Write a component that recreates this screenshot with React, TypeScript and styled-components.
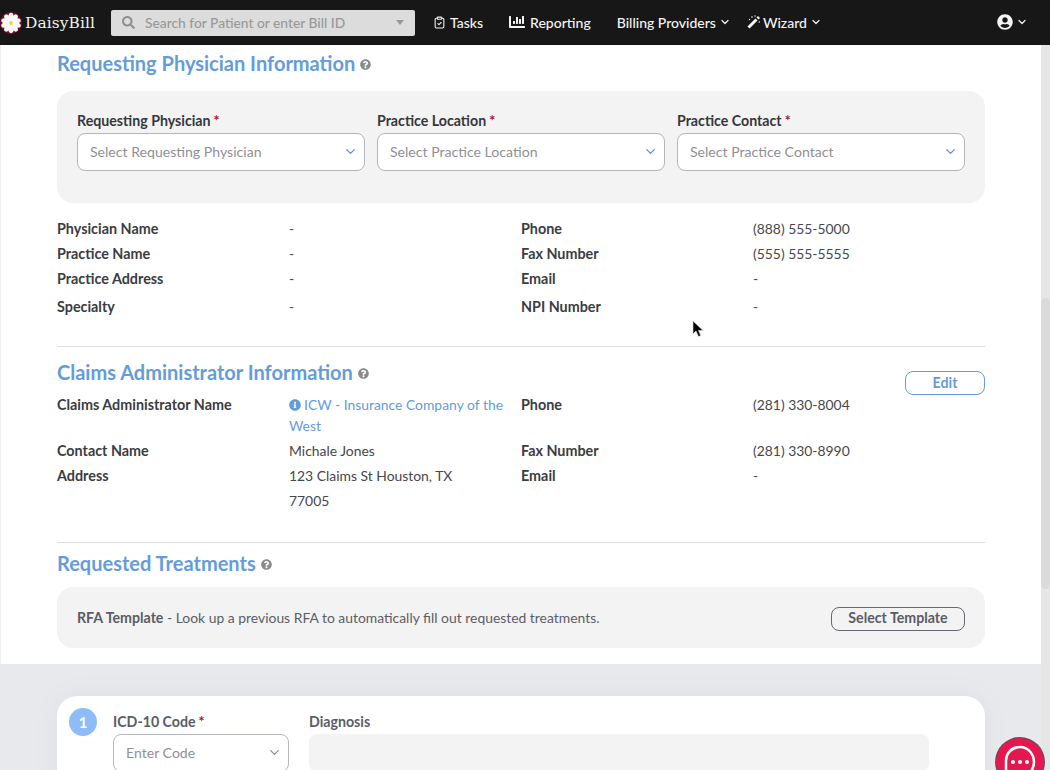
import { Fragment } from 'react';
import styled, { createGlobalStyle } from 'styled-components';
import { ChevronDown, ClipboardCheck } from 'lucide-react';
import { FaChartBar, FaInfoCircle, FaQuestionCircle, FaSearch, FaUserCircle } from 'react-icons/fa';

const GlobalStyle = createGlobalStyle`
  html, body {
    margin: 0;
    height: 770px;
    overflow: hidden;
    background: #e8e9ed;
    font-family: 'Lato', 'Open Sans', sans-serif;
    color: #3a3c42;
  }
  * { box-sizing: border-box; }
`;

const Shell = styled.div`
  position: relative;
  width: 1050px;
  height: 770px;
  overflow: hidden;
`;

const Nav = styled.header`
  height: 45px;
  background: #171717;
  display: flex;
  align-items: center;
  color: #f4f4f4;
  font-size: 14px;
  font-weight: 500;
`;

const Logo = styled.div`
  width: 111px;
  flex: none;
  display: flex;
  align-items: center;
  gap: 3px;
  font-family: 'DejaVu Serif', serif;
  font-size: 15.4px;
  letter-spacing: 0.1px;
  color: #f2f2f2;
`;

const SearchBox = styled.div`
  width: 304px;
  height: 26px;
  flex: none;
  background: #dcdcdc;
  border-radius: 2px;
  display: flex;
  align-items: center;
  padding: 0 11px;
  color: #999;
  font-size: 13.8px;
`;

const SearchText = styled.span`
  flex: 1;
  margin-left: 10px;
`;

const Caret = styled.span`
  width: 0;
  height: 0;
  border-left: 4.5px solid transparent;
  border-right: 4.5px solid transparent;
  border-top: 5px solid #999;
`;

const NavItem = styled.div<{ $left: number; $gap?: number }>`
  margin-left: ${(p) => p.$left}px;
  display: flex;
  align-items: center;
  gap: ${(p) => p.$gap ?? 5}px;
  margin-top: -1px;
`;

const Body = styled.div`
  display: flex;
  height: 725px;
`;

const Page = styled.main`
  width: 1041px;
  flex: none;
`;

const WhiteArea = styled.div`
  height: 619px;
  background: #fff;
  padding: 0 56px 0 56px;
  border-left: 1px solid #f0f0f2;
`;

const Inner = styled.div`
  width: 928px;
`;

const Heading = styled.h2<{ $top?: number }>`
  margin: ${(p) => p.$top ?? 0}px 0 0;
  height: 36px;
  display: flex;
  align-items: center;
  gap: 5px;
  font-size: 20px;
  font-weight: 700;
  color: #649cdb;
  svg {
    color: #8b8b8b;
    margin-top: 3px;
  }
`;

const Panel = styled.div`
  margin-top: 10px;
  background: #f3f3f4;
  border-radius: 16px;
  padding: 20px 20px 32px;
  display: grid;
  grid-template-columns: repeat(3, 288px);
  gap: 12px;
`;

const FieldLabel = styled.label<{ $muted?: boolean }>`
  display: block;
  height: 22px;
  font-size: 14.2px;
  font-weight: 700;
  line-height: 19px;
  color: ${(p) => (p.$muted ? '#5b5d66' : '#35373d')};
`;

const Star = styled.span`
  color: #b0122f;
  margin-left: 3px;
`;

const SelectBox = styled.div<{ $tone?: string }>`
  height: 38px;
  background: #fff;
  border: 1px solid #b5b6bc;
  border-radius: 8px;
  display: flex;
  align-items: center;
  justify-content: space-between;
  padding: 0 6px 1px 12px;
  font-size: 14.1px;
  color: #8f9096;
  svg {
    color: ${(p) => p.$tone ?? '#5f92cf'};
  }
`;

const DataGrid = styled.dl<{ $top?: number }>`
  margin: ${(p) => p.$top ?? 0}px 0 0;
  display: grid;
  grid-template-columns: repeat(4, 232px);
  font-size: 13.9px;
`;

const Term = styled.dt<{ $h?: number }>`
  font-size: 14.35px;
  font-weight: 700;
  color: #3a3c42;
  line-height: ${(p) => p.$h ?? 25}px;
`;

const Value = styled.dd<{ $h?: number }>`
  margin: 0;
  color: #45474d;
  line-height: ${(p) => p.$h ?? 25}px;
`;

const LinkText = styled.a`
  display: block;
  color: #649cdb;
  line-height: 21px;
  padding: 2px 0;
  svg {
    vertical-align: -1px;
    margin-right: 3px;
  }
`;

const Divider = styled.hr<{ $top: number }>`
  margin: ${(p) => p.$top}px 0 0;
  border: 0;
  border-top: 1px solid #dedfe2;
`;

const ClaimsHead = styled.div`
  display: flex;
  justify-content: space-between;
  align-items: flex-start;
  height: 38px;
  margin-top: 7px;
`;

const OutlineButton = styled.button<{ $w: number; $dark?: boolean; $top?: number }>`
  width: ${(p) => p.$w}px;
  height: 24px;
  margin-top: ${(p) => p.$top ?? 0}px;
  background: ${(p) => (p.$dark ? 'transparent' : '#fff')};
  border: 1px solid ${(p) => (p.$dark ? '#66686f' : '#649cdb')};
  border-radius: 8px;
  color: ${(p) => (p.$dark ? '#5b5d66' : '#649cdb')};
  font: 700 14.2px 'Lato', sans-serif;
  padding: 0 0 2px;
`;

const TemplatePanel = styled.div`
  margin-top: 6px;
  height: 61px;
  background: #f3f3f4;
  border-radius: 16px;
  padding: 0 20px;
  display: flex;
  align-items: center;
  justify-content: space-between;
  font-size: 13.9px;
  color: #5b5d66;
  b {
    font-size: 14.2px;
    font-weight: 700;
  }
`;

const CardWrap = styled.div`
  padding: 32px 0 0 57px;
`;

const Card = styled.section`
  width: 928px;
  height: 120px;
  background: #fff;
  border-radius: 20px;
  box-shadow: 0 0 24px rgba(120, 122, 135, 0.08);
  padding: 12px 0 0 12px;
  display: flex;
`;

const StepBadge = styled.div`
  width: 28px;
  height: 28px;
  flex: none;
  border-radius: 50%;
  background: #8dbcf7;
  color: #fff;
  font-size: 15px;
  font-weight: 700;
  display: flex;
  align-items: center;
  justify-content: center;
`;

const Field = styled.div<{ $w: number; $left: number }>`
  width: ${(p) => p.$w}px;
  margin-left: ${(p) => p.$left}px;
  padding-top: 4px;
`;

const GreyInput = styled.div`
  height: 38px;
  background: #f3f3f4;
  border-radius: 8px;
`;

const ScrollTrack = styled.aside`
  position: relative;
  width: 9px;
  flex: none;
  background: #e6e6e6;
`;

const ScrollThumb = styled.div`
  position: absolute;
  left: 0;
  top: 253px;
  width: 9px;
  height: 291px;
  border-radius: 5px;
  background: #dadada;
`;

const ChatBubble = styled.div`
  position: absolute;
  left: 995px;
  top: 737px;
  width: 50px;
  height: 50px;
`;

const Pointer = styled.div`
  position: absolute;
  left: 692px;
  top: 320px;
  width: 12px;
  height: 19px;
`;

const DaisyMark = () => (
  <svg width="22" height="22" viewBox="0 0 22 22">
    <circle cx="11" cy="11" r="11" fill="#6d0c26" />
    {[0, 36, 72, 108, 144, 180, 216, 252, 288, 324].map((a) => (
      <ellipse key={a} cx="11" cy="5.4" rx="2.7" ry="4.6" fill="#fbf8f8" transform={`rotate(${a} 11 11)`} />
    ))}
    <circle cx="11" cy="11" r="2" fill="#f3d94e" />
  </svg>
);

const WandIcon = () => (
  <svg width="13" height="14" viewBox="0 0 13 14">
    <path d="M1.500 12.500 9.500 4.500" stroke="#f4f4f4" strokeWidth="3" fill="none" />
    <path d="M10.500 3.500 12 2" stroke="#f4f4f4" strokeWidth="3" fill="none" />
    <circle cx="5" cy="2" r="0.8" fill="#f4f4f4" />
    <circle cx="8" cy="1" r="0.7" fill="#f4f4f4" />
    <circle cx="2.500" cy="4.500" r="0.7" fill="#f4f4f4" />
    <circle cx="12.300" cy="7" r="0.7" fill="#f4f4f4" />
  </svg>
);

const ChatIcon = () => (
  <svg width="50" height="50" viewBox="0 0 50 50">
    <circle cx="25" cy="25" r="25" fill="#5a5560" />
    <circle cx="25" cy="25" r="24" fill="#e5174f" />
    <path d="M25 10c-8 0-14 6-14 14v12c0 3 2 4 5 4h9c8 0 14-7 14-15s-6-15-14-15z" fill="none" stroke="#fff" strokeWidth="2.5" />
    <circle cx="18" cy="25" r="2" fill="#fff" />
    <circle cx="25" cy="25" r="2" fill="#fff" />
    <circle cx="32" cy="25" r="2" fill="#fff" />
  </svg>
);

const Help = () => <FaQuestionCircle size={11} />;

const Required = () => <Star>*</Star>;

const NavChevron = () => <ChevronDown size={12} strokeWidth={2.4} />;

const physicianRows = [
  ['Physician Name', '-', 'Phone', '(888) 555-5000'],
  ['Practice Name', '-', 'Fax Number', '(555) 555-5555'],
  ['Practice Address', '-', 'Email', '-'],
];

const selects = [
  ['Requesting Physician', 'Select Requesting Physician'],
  ['Practice Location', 'Select Practice Location'],
  ['Practice Contact', 'Select Practice Contact'],
];

export default function App() {
  return (
    <Shell>
      <GlobalStyle />
      <Nav>
        <Logo>
          <DaisyMark />
          <span>DaisyBill</span>
        </Logo>
        <SearchBox>
          <FaSearch size={13} color="#8f8f8f" />
          <SearchText>Search for Patient or enter Bill ID</SearchText>
          <Caret />
        </SearchBox>
        <NavItem $left={18} $gap={4}>
          <ClipboardCheck size={13} strokeWidth={2} />
          Tasks
        </NavItem>
        <NavItem $left={26}>
          <FaChartBar size={16} />
          Reporting
        </NavItem>
        <NavItem $left={26} $gap={3}>
          Billing Providers
          <NavChevron />
        </NavItem>
        <NavItem $left={16} $gap={3}>
          <WandIcon />
          Wizard
          <NavChevron />
        </NavItem>
        <NavItem $left={175} $gap={3}>
          <FaUserCircle size={16} />
          <NavChevron />
        </NavItem>
      </Nav>
      <Body>
        <Page>
          <WhiteArea>
            <Inner>
              <Heading>
                Requesting Physician Information <Help />
              </Heading>
              <Panel>
                {selects.map(([label, placeholder]) => (
                  <div key={label}>
                    <FieldLabel>
                      {label}
                      <Required />
                    </FieldLabel>
                    <SelectBox>
                      {placeholder}
                      <ChevronDown size={15} />
                    </SelectBox>
                  </div>
                ))}
              </Panel>
              <DataGrid $top={13}>
                {physicianRows.map((row) => (
                  <Fragment key={row[0]}>
                    <Term>{row[0]}</Term>
                    <Value>{row[1]}</Value>
                    <Term>{row[2]}</Term>
                    <Value>{row[3]}</Value>
                  </Fragment>
                ))}
                <Term $h={31}>Specialty</Term>
                <Value $h={31}>-</Value>
                <Term $h={31}>NPI Number</Term>
                <Value $h={31}>-</Value>
              </DataGrid>
              <Divider $top={24} />
              <ClaimsHead>
                <Heading>
                  Claims Administrator Information <Help />
                </Heading>
                <OutlineButton $w={80} $top={17}>
                  Edit
                </OutlineButton>
              </ClaimsHead>
              <DataGrid>
                <Term>Claims Administrator Name</Term>
                <Value>
                  <LinkText>
                    <FaInfoCircle size={12} />
                    ICW - Insurance Company of the West
                  </LinkText>
                </Value>
                <Term>Phone</Term>
                <Value>(281) 330-8004</Value>
                <Term>Contact Name</Term>
                <Value>Michale Jones</Value>
                <Term>Fax Number</Term>
                <Value>(281) 330-8990</Value>
                <Term>Address</Term>
                <Value>
                  123 Claims St Houston, TX
                  <br />
                  77005
                </Value>
                <Term>Email</Term>
                <Value>-</Value>
              </DataGrid>
              <Divider $top={29} />
              <Heading $top={2}>
                Requested Treatments <Help />
              </Heading>
              <TemplatePanel>
                <span>
                  <b>RFA Template</b> - Look up a previous RFA to automatically fill out requested treatments.
                </span>
                <OutlineButton $w={134} $dark $top={2}>
                  Select Template
                </OutlineButton>
              </TemplatePanel>
            </Inner>
          </WhiteArea>
          <CardWrap>
            <Card>
              <StepBadge>1</StepBadge>
              <Field $w={176} $left={16}>
                <FieldLabel $muted>
                  ICD-10 Code
                  <Required />
                </FieldLabel>
                <SelectBox $tone="#8a8b90">
                  Enter Code
                  <ChevronDown size={15} />
                </SelectBox>
              </Field>
              <Field $w={620} $left={20}>
                <FieldLabel $muted>Diagnosis</FieldLabel>
                <GreyInput />
              </Field>
            </Card>
          </CardWrap>
        </Page>
        <ScrollTrack>
          <ScrollThumb />
        </ScrollTrack>
      </Body>
      <Pointer>
        <svg width="12" height="19" viewBox="0 0 12 19">
          <path d="M1 1v13l3-3 2.500 5.500 2.200-1L6.500 10.500H11z" fill="#000" stroke="#ddd" strokeWidth="0.6" />
        </svg>
      </Pointer>
      <ChatBubble>
        <ChatIcon />
      </ChatBubble>
    </Shell>
  );
}
